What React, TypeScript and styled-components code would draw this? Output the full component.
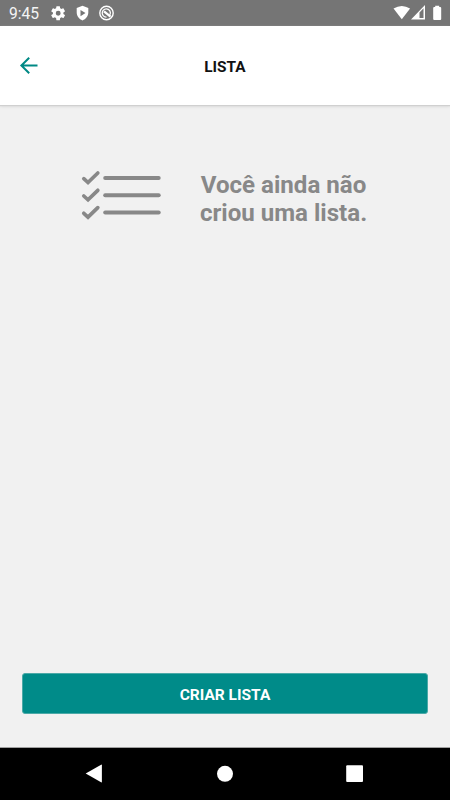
import React from 'react';
import styled, { createGlobalStyle } from 'styled-components';

const GlobalStyle = createGlobalStyle`
  * { box-sizing: border-box; }
  body { margin: 0; background: #f1f1f1; font-family: Roboto, "Liberation Sans", sans-serif; }
`;

const Screen = styled.div`
  display: flex;
  flex-direction: column;
  width: 450px;
  height: 800px;
  overflow: hidden;
  background: #f1f1f1;
`;

const StatusBar = styled.div`
  display: flex;
  justify-content: space-between;
  height: 26px;
  flex: none;
  background: #757575;
  color: #fff;
`;

const Clock = styled.time`
  width: 50px;
  padding-left: 9px;
  font-size: 15.6px;
  line-height: 28px;
  color: #f4f4f4;
`;

const StatusGroup = styled.div`
  display: flex;
`;

const Glyph = styled.svg`
  display: block;
  flex: none;
`;

const Header = styled.header`
  display: grid;
  grid-template-columns: 60px 1fr 60px;
  align-items: center;
  height: 79px;
  flex: none;
  background: #fff;
  box-shadow: 0 1px 1px #d0d0d0, 0 2px 3px #dedede;
`;

const BackButton = styled.button`
  width: 60px;
  height: 79px;
  padding: 0;
  border: 0;
  background: none;
`;

const Title = styled.h1`
  margin: 0;
  padding-top: 2px;
  text-align: center;
  font-size: 15.4px;
  line-height: 18px;
  font-weight: 700;
  color: #111;
`;

const Content = styled.main`
  display: flex;
  flex: 1;
  flex-direction: column;
  justify-content: space-between;
  padding: 60px 22px 33px;
`;

const EmptyState = styled.section`
  display: flex;
  gap: 34px;
  padding-left: 54px;
`;

const Message = styled.p`
  width: 175px;
  margin: 6px 0 0;
  text-align: center;
  white-space: nowrap;
  font-size: 24.1px;
  line-height: 28px;
  font-weight: 700;
  color: #888;
`;

const CreateButton = styled.button`
  height: 41px;
  padding: 2px 0 0;
  border: 1px solid #4ba9a7;
  border-radius: 3px;
  background: #008b89;
  color: #fff;
  font: 700 15.5px/18px Roboto, "Liberation Sans", sans-serif;
`;

const NavigationBar = styled.nav`
  display: grid;
  grid-template-columns: repeat(3, 130px);
  justify-content: center;
  height: 53px;
  flex: none;
  border-top: 1px solid #a0a0a0;
  background: #000;
`;

const checkRows = [0, 17.3, 34.6];

export default function App() {
  return (
    <>
      <GlobalStyle />
      <Screen>
        <StatusBar>
          <StatusGroup>
            <Clock>9:45</Clock>
            <Glyph width="70" height="26" fill="#fff">
              <g transform="translate(-.2 4.8) scale(.7)">
                <path d="M19.4 13a7.8 7.8 0 0 0 0-2l2.1-1.6a.5.5 0 0 0 .1-.7l-2-3.4a.5.5 0 0 0-.6-.2l-2.5 1a7.4 7.4 0 0 0-1.7-1L14.4 2.4a.5.5 0 0 0-.5-.4h-4a.5.5 0 0 0-.5.4L9 5.1a7.4 7.4 0 0 0-1.7 1l-2.5-1a.5.5 0 0 0-.6.2l-2 3.4a.5.5 0 0 0 .1.7L4.5 11a7.8 7.8 0 0 0 0 2l-2.2 1.6a.5.5 0 0 0-.1.7l2 3.4c.1.2.4.3.6.2l2.5-1c.5.4 1.1.8 1.7 1l.4 2.7c0 .3.3.4.5.4h4c.2 0 .5-.1.5-.4l.4-2.7c.6-.2 1.2-.6 1.7-1l2.5 1c.2.1.5 0 .6-.2l2-3.4a.5.5 0 0 0-.1-.7ZM12 15.5a3.5 3.5 0 1 1 0-7 3.5 3.5 0 0 1 0 7Z" />
              </g>
              <path fillRule="evenodd" d="M32.5 5.7 26.7 8.1v4.5c0 3.5 2.4 6.8 5.8 7.8 3.4-1 5.8-4.3 5.8-7.8V8.1Zm-2 4.2 5 3.1-5 3.2Z" />
              <circle cx="56.5" cy="13" r="6.7" fill="none" stroke="#fff" strokeWidth="1.4" />
              <path d="M59.2 15.9a4.1 4.1 0 1 0-2.7 1.2" fill="none" stroke="#fff" strokeWidth="1.3" />
              <path d="m54 11.3 6.5 5.4" fill="none" stroke="#fff" strokeWidth="2.3" />
            </Glyph>
          </StatusGroup>
          <Glyph width="60" height="26" fill="#fff">
            <path d="M3.5 8.5q8.3-5 16.6 0l-8.3 10.7Z" />
            <path fillRule="evenodd" d="M35 5v14.5H21Zm-1.5 3.2-4 4.4v5.4h4Z" />
            <path d="M45 6.2h2V5h4v1.2h1q1 0 1 1v11q0 1-1 1h-6q-1 0-1-1v-11q0-1 1-1Z" transform="translate(-1.8 .7)" />
          </Glyph>
        </StatusBar>
        <Header>
          <BackButton aria-label="Voltar">
            <Glyph width="60" height="79" fill="none" stroke="#008985" strokeWidth="2">
              <path d="M37.5 39.5H21M29.2 31.7l-7.8 7.8 7.8 7.8" />
            </Glyph>
          </BackButton>
          <Title>LISTA</Title>
        </Header>
        <Content>
          <EmptyState>
            <Glyph width="86" height="60" fill="none" stroke="#888" strokeWidth="4" strokeLinecap="round">
              {checkRows.map((y) => (
                <g key={y} transform={`translate(0 ${y})`}>
                  <path d="m7.8 13.7 4.2 3.8L21.8 8" strokeWidth="3.7" />
                  <path d="M29.2 13h53.5" />
                </g>
              ))}
            </Glyph>
            <Message>Você ainda não<br />criou uma lista.</Message>
          </EmptyState>
          <CreateButton>CRIAR LISTA</CreateButton>
        </Content>
        <NavigationBar>
          <Glyph width="130" height="52" fill="#fff"><path d="m55.7 25.5 15.4-8.8q.8-.4.8.6v16.4q0 1-.8.6Z" /></Glyph>
          <Glyph width="130" height="52" fill="#fff"><circle cx="65" cy="25.8" r="8" /></Glyph>
          <Glyph width="130" height="52" fill="#fff"><rect x="56.2" y="17.2" width="16.8" height="16.8" rx="1" /></Glyph>
        </NavigationBar>
      </Screen>
    </>
  );
}
